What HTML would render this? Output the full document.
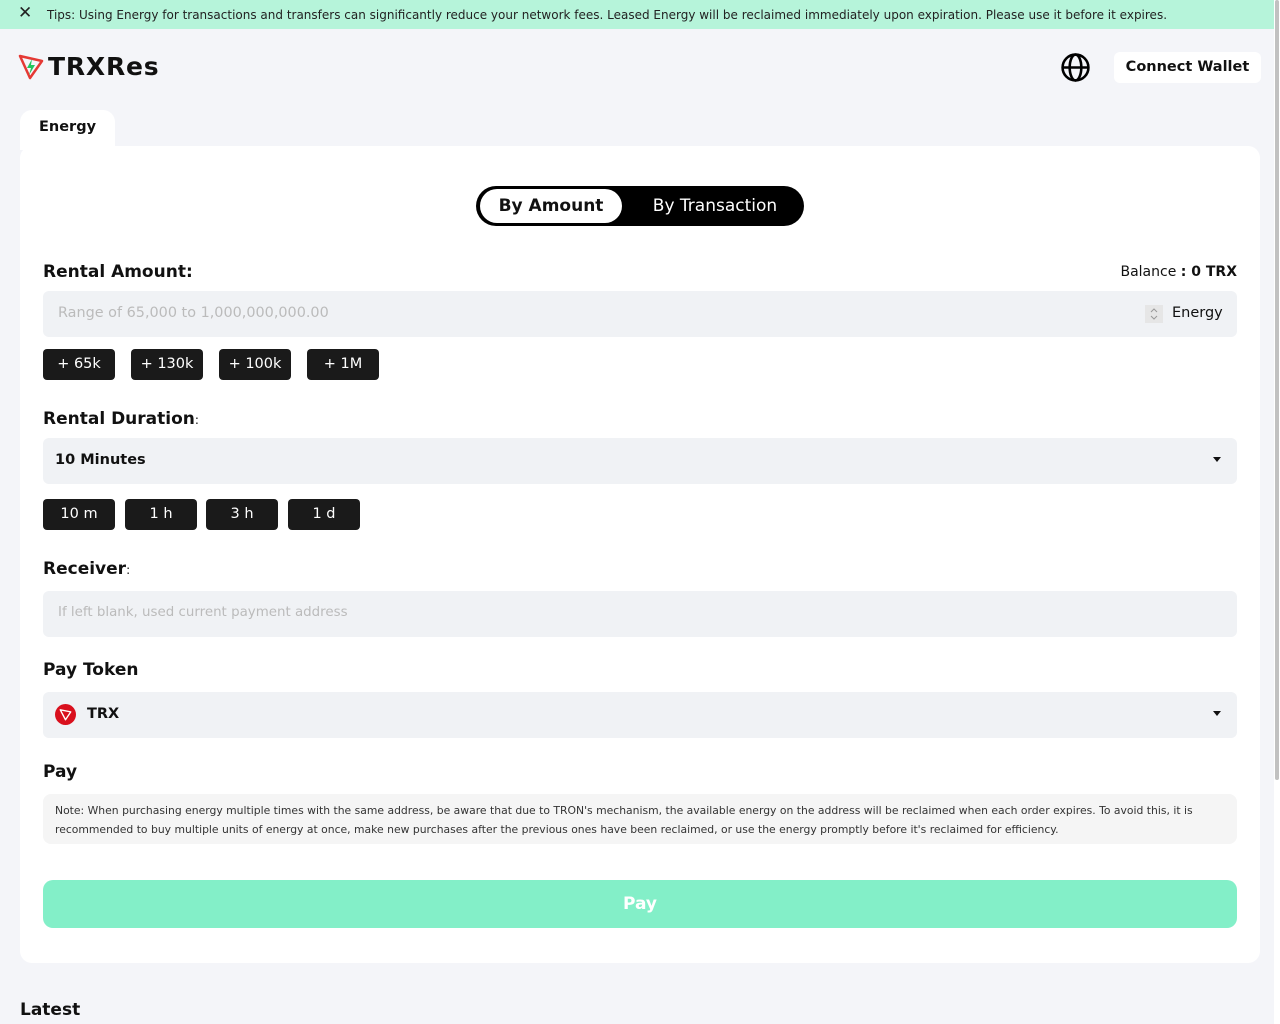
<!DOCTYPE html>
<html><head><meta charset="utf-8"><style>
*{box-sizing:border-box;margin:0;padding:0}
body{width:1280px;height:1024px;overflow:hidden;background:#f4f5f9;font-family:"DejaVu Sans","Liberation Sans",sans-serif;color:#111;position:relative}
.abs{position:absolute}
.banner{left:0;top:0;width:1280px;height:29px;background:#b6f4da;font-size:12px;color:#222}
.sb{right:0;top:0;width:6px;height:1024px;background:#fff}
.sb i{position:absolute;left:1px;top:0;width:4px;height:780px;background:#c1c1c1;border-radius:2px}
.card{left:20px;top:146px;width:1240px;height:817px;background:#fff;border-radius:12px}
.tab{left:20px;top:110px;width:95px;height:40px;background:#fff;border-radius:12px 12px 0 0;font-weight:bold;font-size:14.5px;padding:9px 0 0 19px}
.lbl{font-weight:bold;font-size:17px}
.inp{background:#f0f2f5;border-radius:6px;height:46px;left:43px;width:1194px}
.btn{background:#1a1a1a;color:#fff;border-radius:4px;height:31px;width:72px;font-size:14.5px;text-align:center;line-height:31px}
.ph{color:#bbb}
.arr{left:1170px;top:19px;width:0;height:0;border-left:4px solid transparent;border-right:4px solid transparent;border-top:5px solid #111}
</style></head><body>
<div class="abs banner"><span class="abs" style="left:18px;top:3px;font-size:17px">✕</span><span class="abs" style="left:47px;top:8px">Tips: Using Energy for transactions and transfers can significantly reduce your network fees. Leased Energy will be reclaimed immediately upon expiration. Please use it before it expires.</span></div>
<div class="abs sb"><i></i></div>
<svg class="abs" style="left:18px;top:53px" width="28" height="28" viewBox="0 0 28 28"><path d="M2 3 L24 8 L12 25 Z" fill="none" stroke="#e53935" stroke-width="2.5" stroke-linejoin="round"/><path d="M14 6 L9 15 L13 15 L11 22 L17 12 L13 12 Z" fill="#22c55e"/></svg>
<div class="abs" style="left:48px;top:52px;font-size:25px;font-weight:bold;letter-spacing:0.8px">TRXRes</div>
<svg class="abs" style="left:1060px;top:52px" width="31" height="31" viewBox="0 0 24 24" fill="none" stroke="#000" stroke-width="2"><circle cx="12" cy="12" r="10"/><ellipse cx="12" cy="12" rx="4.5" ry="10"/><path d="M2 12h20"/></svg>
<div class="abs" style="left:1114px;top:52px;width:147px;height:31px;background:#fff;border-radius:6px;font-weight:bold;font-size:14.5px;text-align:center;line-height:31px">Connect Wallet</div>
<div class="abs tab">Energy</div>
<div class="abs card"></div>
<div class="abs" style="left:476px;top:186px;width:328px;height:40px;background:#000;border-radius:20px"></div>
<div class="abs" style="left:480px;top:189px;width:142px;height:34px;background:#fff;border-radius:17px;font-weight:bold;font-size:17px;text-align:center;line-height:34px">By Amount</div>
<div class="abs" style="left:622px;top:189px;width:186px;height:34px;color:#fff;font-size:17px;text-align:center;line-height:34px">By Transaction</div>
<div class="abs lbl" style="left:43px;top:262px">Rental Amount:</div>
<div class="abs" style="right:43px;top:264px;font-size:14px">Balance <b>: 0 TRX</b></div>
<div class="abs inp" style="top:291px"><span class="abs ph" style="left:15px;top:14px;font-size:14.4px">Range of 65,000 to 1,000,000,000.00</span><svg class="abs" style="left:1102px;top:14px" width="18" height="18" viewBox="0 0 18 18"><rect width="18" height="18" fill="#e6e6e6"/><path d="M6 7l3-3 3 3M6 11l3 3 3-3" fill="none" stroke="#999" stroke-width="1"/></svg><span class="abs" style="left:1129px;top:14px;font-size:14.5px">Energy</span></div>
<div class="abs btn" style="left:43px;top:349px">+ 65k</div>
<div class="abs btn" style="left:131px;top:349px">+ 130k</div>
<div class="abs btn" style="left:219px;top:349px">+ 100k</div>
<div class="abs btn" style="left:307px;top:349px">+ 1M</div>
<div class="abs lbl" style="left:43px;top:409px">Rental Duration<span style="font-size:12px;font-weight:normal">:</span></div>
<div class="abs inp" style="top:438px"><b class="abs" style="left:12px;top:14px;font-size:14.5px">10 Minutes</b><i class="abs arr"></i></div>
<div class="abs btn" style="left:43px;top:499px">10 m</div>
<div class="abs btn" style="left:125px;top:499px">1 h</div>
<div class="abs btn" style="left:206px;top:499px">3 h</div>
<div class="abs btn" style="left:288px;top:499px">1 d</div>
<div class="abs lbl" style="left:43px;top:559px">Receiver<span style="font-size:12px;font-weight:normal">:</span></div>
<div class="abs inp" style="top:591px"><span class="abs ph" style="left:15px;top:14px;font-size:13.4px">If left blank, used current payment address</span></div>
<div class="abs lbl" style="left:43px;top:660px">Pay Token</div>
<div class="abs inp" style="top:692px"><svg class="abs" style="left:12px;top:12px" width="21" height="21" viewBox="0 0 20 20"><circle cx="10" cy="10" r="10" fill="#d9101d"/><path d="M5 5.5 L15 7.5 L10 15 Z M5 5.5 L10 15" fill="none" stroke="#fff" stroke-width="1.3" stroke-linejoin="round"/></svg><b class="abs" style="left:44px;top:14px;font-size:14.5px">TRX</b><i class="abs arr"></i></div>
<div class="abs lbl" style="left:43px;top:762px">Pay</div>
<div class="abs" style="left:43px;top:794px;width:1194px;height:50px;background:#f5f5f5;border-radius:8px;padding:7px 12px;font-size:10.8px;line-height:19px;color:#333">Note: When purchasing energy multiple times with the same address, be aware that due to TRON's mechanism, the available energy on the address will be reclaimed when each order expires. To avoid this, it is recommended to buy multiple units of energy at once, make new purchases after the previous ones have been reclaimed, or use the energy promptly before it's reclaimed for efficiency.</div>
<div class="abs" style="left:43px;top:880px;width:1194px;height:48px;background:#83efc8;border-radius:10px;color:#fff;font-weight:bold;font-size:17px;text-align:center;line-height:48px">Pay</div>
<div class="abs lbl" style="left:20px;top:1000px">Latest</div>
</body></html>
